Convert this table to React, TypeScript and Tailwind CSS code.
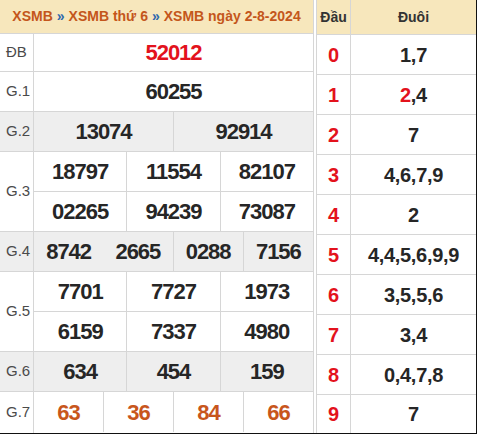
const FONT = "font-['Liberation_Sans',Arial,sans-serif]";

type Cell = { v: string; cls?: string; noLine?: boolean };

function NumRow({ cells, last }: { cells: Cell[]; last?: boolean }) {
  return (
    <div className={`flex h-[40px] ${last ? "" : "border-b border-[#d6d6d6]"}`}>
      {cells.map((c, i) => (
        <div
          key={i}
          className={`flex-1 flex items-center justify-center text-[22px] font-bold tracking-[-1px] ${
            i > 0 && !c.noLine ? "border-l border-[#d6d6d6]" : ""
          } ${c.cls ?? "text-[#262626]"}`}
        >
          {c.v}
        </div>
      ))}
    </div>
  );
}

function Prize({
  label,
  rows,
  bg,
  height,
  last,
}: {
  label: string;
  rows: Cell[][];
  bg?: string;
  height?: string;
  last?: boolean;
}) {
  return (
    <div className={`flex ${height ?? ""} ${last ? "flex-1" : "border-b border-[#d6d6d6]"} ${bg ?? ""}`}>
      <div className="w-[34px] shrink-0 border-r border-[#d6d6d6] flex items-center pl-[6px] text-[15px] text-[#4a4a4a]">
        {label}
      </div>
      <div className="flex-1 flex flex-col">
        {rows.map((r, i) => (
          <NumRow key={i} cells={r} last={i === rows.length - 1} />
        ))}
      </div>
    </div>
  );
}

const c = (...vals: string[]): Cell[] => vals.map((v) => ({ v }));

const loto: [string, React.ReactNode][] = [
  ["0", "1,7"],
  ["1", <><span className="text-[#e3121c]">2</span>,4</>],
  ["2", "7"],
  ["3", "4,6,7,9"],
  ["4", "2"],
  ["5", "4,4,5,6,9,9"],
  ["6", "3,5,5,6"],
  ["7", "3,4"],
  ["8", "0,4,7,8"],
  ["9", "7"],
];

export default function App() {
  return (
    <div className={`${FONT} w-[477px] h-[434px] bg-white flex border-b border-r border-[#111]`}>
      {/* Kết quả */}
      <div className="w-[314px] flex flex-col border-r border-[#d6d6d6]">
        <div className="h-[34px] shrink-0 bg-[#f7e7bc] border-b border-[#d6d6d6] flex items-center justify-center text-[14px] font-bold text-[#c4561b] whitespace-nowrap">
          XSMB <span className="text-[#2d67ad] mx-[4px]">»</span> XSMB thứ 6{" "}
          <span className="text-[#2d67ad] mx-[4px]">»</span> XSMB ngày 2-8-2024
        </div>
        <Prize label="ĐB" height="h-[38px]" rows={[[{ v: "52012", cls: "text-[#e3121c]" }]]} />
        <Prize label="G.1" height="h-[40px]" rows={[c("60255")]} />
        <Prize label="G.2" height="h-[40px]" bg="bg-[#eeeeee]" rows={[c("13074", "92914")]} />
        <Prize
          label="G.3"
          height="h-[80px]"
          rows={[c("18797", "11554", "82107"), c("02265", "94239", "73087")]}
        />
        <Prize
          label="G.4"
          height="h-[40px]"
          bg="bg-[#eeeeee]"
          rows={[[{ v: "8742" }, { v: "2665", noLine: true }, { v: "0288" }, { v: "7156" }]]}
        />
        <Prize
          label="G.5"
          height="h-[80px]"
          rows={[c("7701", "7727", "1973"), c("6159", "7337", "4980")]}
        />
        <Prize label="G.6" height="h-[40px]" bg="bg-[#eeeeee]" rows={[c("634", "454", "159")]} />
        <Prize
          label="G.7"
          last
          rows={[["63", "36", "84", "66"].map((v) => ({ v, cls: "text-[#c8561c]" }))]}
        />
      </div>

      {/* Lô tô */}
      <div className="ml-[2px] flex-1 flex flex-col border-l border-[#d6d6d6]">
        <div className="h-[35px] shrink-0 flex bg-[#f7e7bc] border-b border-[#d6d6d6] text-[14px] font-bold text-[#333]">
          <div className="w-[34px] border-r border-[#d6d6d6] flex items-center justify-center">Đầu</div>
          <div className="flex-1 flex items-center justify-center">Đuôi</div>
        </div>
        {loto.map(([d, t], i) => (
          <div
            key={d}
            className={`flex ${i === loto.length - 1 ? "flex-1" : "h-[40px] shrink-0 border-b border-[#d6d6d6]"}`}
          >
            <div className="w-[34px] border-r border-[#d6d6d6] flex items-center justify-center text-[20px] font-bold text-[#e3121c]">
              {d}
            </div>
            <div className="flex-1 flex items-center justify-center text-[20px] font-bold tracking-[-0.3px] text-[#262626]">
              {t}
            </div>
          </div>
        ))}
      </div>
    </div>
  );
}
